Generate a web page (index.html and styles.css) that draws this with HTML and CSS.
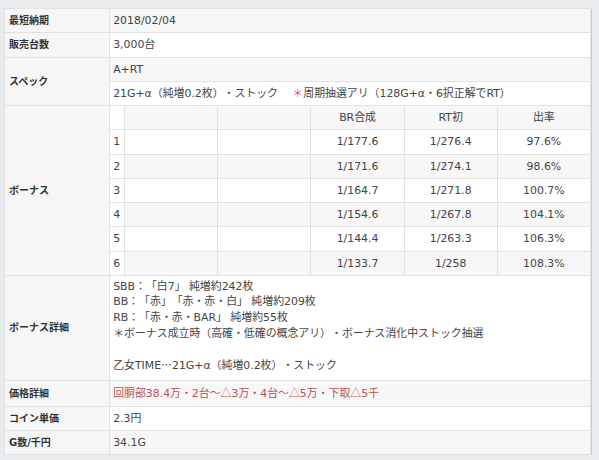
FILE: index.html
```html
<!DOCTYPE html>
<html lang="ja">
<head>
<meta charset="utf-8">
<link rel="stylesheet" href="styles.css">
</head>
<body>
<div class="wrap">
<table class="spec">
  <colgroup>
    <col class="c-label"><col class="c-num"><col class="c-col"><col class="c-col"><col class="c-col"><col class="c-col"><col class="c-col">
  </colgroup>
  <tr class="odd"><th>最短納期</th><td colspan="6">2018/02/04</td></tr>
  <tr><th>販売台数</th><td colspan="6">3,000台</td></tr>
  <tr class="odd"><th rowspan="2">スペック</th><td colspan="6">A+RT</td></tr>
  <tr><td colspan="6">21G+α（純増0.2枚）・ストック　 <span class="mark">＊</span>周期抽選アリ（128G+α・6択正解でRT）</td></tr>
  <tr class="odd"><th rowspan="7">ボーナス</th><td class="num"></td><td></td><td></td><td class="c">BR合成</td><td class="c">RT初</td><td class="c">出率</td></tr>
  <tr><td class="num">1</td><td></td><td></td><td class="c">1/177.6</td><td class="c">1/276.4</td><td class="c">97.6%</td></tr>
  <tr class="odd"><td class="num">2</td><td></td><td></td><td class="c">1/171.6</td><td class="c">1/274.1</td><td class="c">98.6%</td></tr>
  <tr><td class="num">3</td><td></td><td></td><td class="c">1/164.7</td><td class="c">1/271.8</td><td class="c">100.7%</td></tr>
  <tr class="odd"><td class="num">4</td><td></td><td></td><td class="c">1/154.6</td><td class="c">1/267.8</td><td class="c">104.1%</td></tr>
  <tr><td class="num">5</td><td></td><td></td><td class="c">1/144.4</td><td class="c">1/263.3</td><td class="c">106.3%</td></tr>
  <tr class="odd"><td class="num">6</td><td></td><td></td><td class="c">1/133.7</td><td class="c">1/258</td><td class="c">108.3%</td></tr>
  <tr><th>ボーナス詳細</th><td colspan="6" class="detail">SBB：「白7」 純増約242枚<br>BB：「赤」「赤・赤・白」 純増約209枚<br>RB：「赤・赤・BAR」 純増約55枚<br>＊ボーナス成立時（高確・低確の概念アリ）・ボーナス消化中ストック抽選<br><br>乙女TIME<span class="cj">…</span>21G+α（純増0.2枚）・ストック</td></tr>
  <tr class="odd"><th>価格詳細</th><td colspan="6" class="red">回胴部38.4万・2台～<span class="cj">△</span>3万・4台～<span class="cj">△</span>5万・下取<span class="cj">△</span>5千</td></tr>
  <tr><th>コイン単価</th><td colspan="6">2.3円</td></tr>
  <tr class="odd"><th>G数/千円</th><td colspan="6">34.1G</td></tr>
</table>
</div>
</body>
</html>
```

FILE: styles.css
```css
html, body {
  margin: 0;
  padding: 0;
  background: #e9ecef;
}
.wrap {
  padding: 8px 0 0 4px;
}
.spec {
  width: 587px;
  table-layout: fixed;
  border-collapse: collapse;
  border: 1px solid #c6c6c6;
  box-shadow: 1px 1px 0 #cdcdcd;
  background: #fff;
  font-family: "DejaVu Sans", "Noto Sans CJK JP", sans-serif;
  font-size: 10.9px;
  color: #444;
  text-spacing-trim: space-all;
}
.c-label { width: 105px; }
.c-num { width: 15px; }
.c-col { width: 93px; }
.spec th, .spec td {
  border: 1px solid #e2e2e2;
  padding: 4px 3px;
  line-height: 15.25px;
  height: 15.25px;
  text-align: left;
  vertical-align: middle;
  font-weight: normal;
}
.spec th {
  background: #f6f6f6;
  color: #333;
  font-weight: bold;
  font-size: 10px;
  padding-left: 4px;
}
.spec tr.odd td {
  background: #f7f7f7;
}
.spec td.num, .spec tr.odd td.num {
  background: #fff;
}
.spec td.c {
  text-align: center;
}
.spec td.detail {
  line-height: 15.6px;
  padding-top: 3px;
  padding-bottom: 7px;
}
.cj {
  font-family: "Noto Sans CJK JP", sans-serif;
}
.red {
  color: #c0504d;
}
.mark {
  color: #d0606a;
}
```
